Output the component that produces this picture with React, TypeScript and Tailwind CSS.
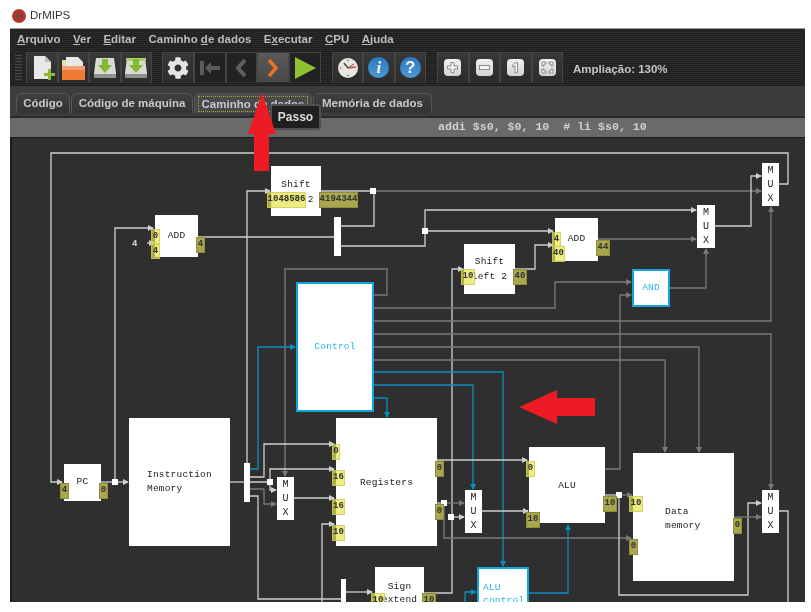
import { FaCog } from "react-icons/fa";

const WHITE = "#cfcfcf";
const GRAY = "#7a7a7a";
const BLUE = "#0a8fc4";

type Wire = { c: string; p: number[][]; arrow?: boolean };

const wires: Wire[] = [
  // program counter loop
  { c: WHITE, p: [[779, 184], [788, 184], [788, 153], [51, 153], [51, 482], [62, 482]], arrow: true },
  { c: WHITE, p: [[101, 482], [128, 482]], arrow: true },
  { c: WHITE, p: [[115, 482], [115, 228], [153, 228]], arrow: true },
  { c: WHITE, p: [[147, 243], [154, 243]], arrow: true },
  { c: WHITE, p: [[198, 237], [334, 237]] },
  { c: WHITE, p: [[341, 226], [374, 226], [374, 191]] },
  { c: WHITE, p: [[341, 246], [425, 246], [425, 210], [696, 210]], arrow: true },
  { c: WHITE, p: [[425, 231], [553, 231]], arrow: true },
  { c: WHITE, p: [[321, 191], [373, 191]] },
  { c: GRAY, p: [[373, 191], [761, 191]], arrow: true },
  { c: WHITE, p: [[247, 463], [247, 191], [270, 191]], arrow: true },
  { c: WHITE, p: [[424, 593], [452, 593], [452, 269], [463, 269]], arrow: true },
  { c: WHITE, p: [[515, 269], [535, 269], [535, 245], [553, 245]], arrow: true },
  { c: GRAY, p: [[598, 239], [696, 239]], arrow: true },
  { c: WHITE, p: [[715, 226], [751, 226], [751, 176], [761, 176]], arrow: true },
  { c: GRAY, p: [[670, 288], [706, 288], [706, 249]], arrow: true },
  // control outputs
  { c: GRAY, p: [[373, 295], [387, 295], [387, 269], [285, 269], [285, 476]], arrow: true },
  { c: GRAY, p: [[373, 308], [555, 308], [555, 282], [631, 282]], arrow: true },
  { c: GRAY, p: [[373, 321], [771, 321], [771, 207]], arrow: true },
  { c: GRAY, p: [[373, 334], [771, 334], [771, 489]], arrow: true },
  { c: GRAY, p: [[373, 347], [699, 347], [699, 452]], arrow: true },
  { c: GRAY, p: [[373, 360], [665, 360], [665, 452]], arrow: true },
  { c: BLUE, p: [[373, 372], [503, 372], [503, 566]], arrow: true },
  { c: BLUE, p: [[373, 385], [473, 385], [473, 489]], arrow: true },
  { c: BLUE, p: [[373, 398], [387, 398], [387, 417]], arrow: true },
  { c: BLUE, p: [[250, 469], [258, 469], [258, 347], [295, 347]], arrow: true },
  // instruction fields
  { c: WHITE, p: [[230, 482], [244, 482]] },
  { c: WHITE, p: [[250, 477], [264, 477], [264, 444], [334, 444]], arrow: true },
  { c: WHITE, p: [[250, 482], [270, 482], [270, 469], [334, 469]], arrow: true },
  { c: WHITE, p: [[270, 482], [270, 490], [276, 490]], arrow: true },
  { c: GRAY, p: [[250, 489], [264, 489], [264, 504], [276, 504]], arrow: true },
  { c: WHITE, p: [[250, 496], [258, 496], [258, 599], [341, 599]] },
  { c: WHITE, p: [[294, 498], [334, 498]], arrow: true },
  { c: WHITE, p: [[322, 610], [322, 524], [334, 524]], arrow: true },
  { c: WHITE, p: [[346, 592], [372, 592]], arrow: true },
  // registers and alu
  { c: WHITE, p: [[437, 460], [527, 460]], arrow: true },
  { c: WHITE, p: [[437, 503], [444, 503]] },
  { c: GRAY, p: [[444, 503], [464, 503]], arrow: true },
  { c: GRAY, p: [[444, 503], [444, 538], [631, 538]], arrow: true },
  { c: WHITE, p: [[451, 517], [464, 517]], arrow: true },
  { c: WHITE, p: [[482, 511], [528, 511]], arrow: true },
  { c: GRAY, p: [[605, 469], [620, 469], [620, 295], [631, 295]], arrow: true },
  { c: WHITE, p: [[605, 495], [619, 495]] },
  { c: GRAY, p: [[619, 495], [632, 495]], arrow: true },
  { c: WHITE, p: [[619, 495], [619, 595], [748, 595], [748, 503], [761, 503]], arrow: true },
  { c: GRAY, p: [[734, 517], [761, 517]], arrow: true },
  { c: WHITE, p: [[779, 511], [788, 511], [788, 610]] },
  { c: BLUE, p: [[528, 593], [568, 593], [568, 525]], arrow: true },
  { c: BLUE, p: [[465, 610], [465, 592], [476, 592]], arrow: true },
];

const dots = [
  [373, 191],
  [425, 231],
  [115, 482],
  [270, 482],
  [444, 503],
  [451, 517],
  [619, 495],
];

function arrowHead(w: Wire) {
  const a = w.p[w.p.length - 2];
  const b = w.p[w.p.length - 1];
  const dx = Math.sign(b[0] - a[0]);
  const dy = Math.sign(b[1] - a[1]);
  const s = 5;
  const pts = [
    [b[0] + dx, b[1] + dy],
    [b[0] - dx * s - dy * 3, b[1] - dy * s - dx * 3],
    [b[0] - dx * s + dy * 3, b[1] - dy * s + dx * 3],
  ];
  return pts.map((q) => q.join(",")).join(" ");
}

function Wires() {
  return (
    <svg className="absolute left-0 top-0" width={811} height={612} viewBox="0 0 811 612">
      {wires.map((w, i) => (
        <g key={i}>
          <polyline points={w.p.map((q) => q.join(",")).join(" ")} fill="none" stroke={w.c} strokeWidth={1.3} />
          {w.arrow && <polygon points={arrowHead(w)} fill={w.c} />}
        </g>
      ))}
      {dots.map(([x, y]) => (
        <rect key={`${x}-${y}`} x={x - 3} y={y - 3} width={6} height={6} fill="#ffffff" />
      ))}
    </svg>
  );
}

function Block({ pos, lines, blue, text }: { pos: string; lines?: string[]; blue?: boolean; text?: string }) {
  return (
    <div
      className={`absolute flex flex-col justify-center bg-white font-['Liberation_Mono',monospace] text-[9.5px] tracking-[0.2px] whitespace-pre ${
        blue ? "border-2 border-[#12a5dc] text-[#25b4ea]" : "text-[#222222]"
      } ${pos} ${text ?? "items-center"}`}
    >
      {lines?.map((l, i) => (
        <div key={i}>{l}</div>
      ))}
    </div>
  );
}

function Mux({ pos }: { pos: string }) {
  return (
    <div
      className={`absolute flex flex-col items-center justify-center gap-[3px] bg-white font-['Liberation_Mono',monospace] text-[10px] leading-[11px] text-[#222222] ${pos}`}
    >
      <div>M</div>
      <div>U</div>
      <div>X</div>
    </div>
  );
}

function Val({ pos, v, dark }: { pos: string; v: string; dark?: boolean }) {
  return (
    <div
      className={`absolute flex items-center justify-center border font-['Liberation_Mono',monospace] text-[9px] font-bold text-[#333333] ${
        dark ? "border-[#8f8d38] bg-[#a8a64e]" : "border-[#c8c860]/70 bg-[#e6e650]/70"
      } ${pos}`}
    >
      {v}
    </div>
  );
}

function Bar({ pos }: { pos: string }) {
  return <div className={`absolute bg-white ${pos}`} />;
}

function Datapath() {
  return (
    <div className="relative flex-1 overflow-hidden border-l-2 border-[#1b1b1b] bg-[#2f2f2f]">
      <div className="absolute left-[-12px] top-[-138px] h-[760px] w-[811px]">
        <Wires />
        <div className="absolute left-[132px] top-[238px] font-['Liberation_Mono',monospace] text-[9px] font-bold text-[#d8d8d8]">4</div>

        <Block pos="left-[271px] top-[166px] w-[50px] h-[50px]" lines={["Shift", "left 2"]} text="items-center pt-[1px] leading-[15px]" />
        <Block pos="left-[155px] top-[215px] w-[43px] h-[42px]" lines={["ADD"]} />
        <Block pos="left-[555px] top-[218px] w-[43px] h-[43px]" lines={["ADD"]} />
        <Block pos="left-[464px] top-[244px] w-[51px] h-[50px]" lines={["Shift", "left 2"]} text="items-center leading-[15px]" />
        <Block pos="left-[632px] top-[269px] w-[38px] h-[38px]" lines={["AND"]} blue />
        <Block pos="left-[296px] top-[282px] w-[78px] h-[130px]" lines={["Control"]} blue />
        <Block pos="left-[64px] top-[464px] w-[37px] h-[37px]" lines={["PC"]} />
        <Block pos="left-[129px] top-[418px] w-[101px] h-[128px]" lines={["Instruction", "Memory"]} text="items-start pl-[18px] leading-[14px]" />
        <Block pos="left-[336px] top-[418px] w-[101px] h-[128px]" lines={["Registers"]} text="items-center pt-[2px]" />
        <Block pos="left-[529px] top-[447px] w-[76px] h-[76px]" lines={["ALU"]} text="items-center pt-[2px]" />
        <Block pos="left-[633px] top-[453px] w-[101px] h-[128px]" lines={["Data", "memory"]} text="items-start pl-[32px] pt-[4px] leading-[14px]" />
        <Block pos="left-[375px] top-[567px] w-[49px] h-[50px]" lines={["Sign", "extend"]} text="items-center pt-[2px] leading-[13px]" />
        <Block pos="left-[477px] top-[567px] w-[52px] h-[52px]" lines={["ALU", "control"]} blue text="items-start pl-[4px] pt-[2px] leading-[13px]" />

        <Mux pos="left-[762px] top-[163px] w-[17px] h-[43px]" />
        <Mux pos="left-[697px] top-[205px] w-[18px] h-[43px]" />
        <Mux pos="left-[277px] top-[477px] w-[17px] h-[43px]" />
        <Mux pos="left-[465px] top-[490px] w-[17px] h-[43px]" />
        <Mux pos="left-[762px] top-[490px] w-[17px] h-[43px]" />

        <Bar pos="left-[334px] top-[217px] w-[7px] h-[39px]" />
        <Bar pos="left-[244px] top-[463px] w-[6px] h-[39px]" />
        <Bar pos="left-[341px] top-[579px] w-[5px] h-[40px]" />

        <Val pos="left-[267px] top-[192px] w-[39px] h-[16px]" v="1048586" />
        <Val pos="left-[319px] top-[192px] w-[39px] h-[16px]" v="4194344" dark />
        <Val pos="left-[151px] top-[229px] w-[9px] h-[15px]" v="0" />
        <Val pos="left-[151px] top-[244px] w-[9px] h-[15px]" v="4" />
        <Val pos="left-[196px] top-[237px] w-[9px] h-[16px]" v="4" dark />
        <Val pos="left-[552px] top-[232px] w-[9px] h-[15px]" v="4" />
        <Val pos="left-[552px] top-[246px] w-[13px] h-[16px]" v="40" />
        <Val pos="left-[596px] top-[240px] w-[14px] h-[16px]" v="44" dark />
        <Val pos="left-[461px] top-[269px] w-[14px] h-[16px]" v="10" />
        <Val pos="left-[513px] top-[269px] w-[14px] h-[16px]" v="40" dark />
        <Val pos="left-[60px] top-[483px] w-[9px] h-[16px]" v="4" dark />
        <Val pos="left-[99px] top-[483px] w-[9px] h-[16px]" v="0" dark />
        <Val pos="left-[332px] top-[444px] w-[8px] h-[16px]" v="0" />
        <Val pos="left-[332px] top-[470px] w-[13px] h-[16px]" v="16" />
        <Val pos="left-[332px] top-[499px] w-[13px] h-[16px]" v="16" />
        <Val pos="left-[332px] top-[525px] w-[13px] h-[16px]" v="10" />
        <Val pos="left-[435px] top-[461px] w-[9px] h-[16px]" v="0" dark />
        <Val pos="left-[435px] top-[504px] w-[9px] h-[16px]" v="0" dark />
        <Val pos="left-[526px] top-[461px] w-[9px] h-[16px]" v="0" />
        <Val pos="left-[526px] top-[512px] w-[14px] h-[16px]" v="10" dark />
        <Val pos="left-[603px] top-[496px] w-[14px] h-[16px]" v="10" dark />
        <Val pos="left-[629px] top-[496px] w-[14px] h-[16px]" v="10" />
        <Val pos="left-[629px] top-[539px] w-[9px] h-[16px]" v="0" dark />
        <Val pos="left-[733px] top-[518px] w-[9px] h-[16px]" v="0" dark />
        <Val pos="left-[371px] top-[593px] w-[14px] h-[16px]" v="10" />
        <Val pos="left-[422px] top-[593px] w-[14px] h-[16px]" v="10" dark />
      </div>
    </div>
  );
}

function Tool({ children, tone }: { children: React.ReactNode; tone?: "off" | "hot" }) {
  const bg =
    tone === "off"
      ? "bg-[#222222]"
      : tone === "hot"
        ? "bg-gradient-to-b from-[#5a5a5a] to-[#474747]"
        : "bg-gradient-to-b from-[#383838] to-[#2c2c2c]";
  return (
    <div className={`flex h-[31px] flex-1 items-center justify-center border border-[#444444] border-b-[#333333] ${bg}`}>
      {children}
    </div>
  );
}

function NewIcon() {
  return (
    <svg width="26" height="27" viewBox="0 0 26 27">
      <path d="M5 2h11l6 6v17H5z" fill="#e9e9e9" />
      <path d="M16 2v6h6z" fill="#bdbdbd" />
      <path d="M15 19h4v-4h3v4h4v3h-4v4h-3v-4h-4z" fill="#8cb93a" />
    </svg>
  );
}

function OpenIcon() {
  return (
    <svg width="26" height="26" viewBox="0 0 26 26">
      <path d="M6 2h12l5 5v6H6z" fill="#e8e8e8" />
      <path d="M2 5h4v6H2z" fill="#f0d9a8" />
      <rect x="2" y="11" width="23" height="14" fill="#ee7a35" />
      <rect x="2" y="11" width="23" height="4" fill="#f4a070" />
    </svg>
  );
}

function SaveIcon({ bar }: { bar?: boolean }) {
  return (
    <svg width="26" height="26" viewBox="0 0 26 26">
      <path d="M4 3h18l2 15v5H2v-5z" fill="#d9dcd6" />
      <rect x="2" y="19" width="22" height="4" fill="#8f938c" />
      {bar && <rect x="3" y="3" width="20" height="3" fill="#a9d15c" />}
      <path d="M10 4h6v6h4l-7 8-7-8h4z" fill="#86b832" />
    </svg>
  );
}

function ClockIcon() {
  return (
    <svg width="22" height="22" viewBox="0 0 22 22">
      <circle cx="11" cy="11" r="10" fill="#e8e6df" />
      <path d="M11 11L7 6" stroke="#444444" strokeWidth="1.4" />
      <path d="M11 11l8-1" stroke="#d8443a" strokeWidth="1.4" />
      <path d="M11 11l6-4" stroke="#555555" strokeWidth="1" />
      <circle cx="11" cy="3.5" r="0.8" fill="#666666" />
      <circle cx="3.5" cy="11" r="0.8" fill="#666666" />
      <circle cx="11" cy="18.5" r="0.8" fill="#666666" />
    </svg>
  );
}

function RoundIcon({ glyph, serif }: { glyph: string; serif?: boolean }) {
  return (
    <div
      className={`flex h-[21px] w-[21px] items-center justify-center rounded-full bg-gradient-to-b from-[#2e78bc] to-[#4b9ad8] text-[17px] font-bold text-[#f2f6fa] ${
        serif ? "font-['Liberation_Serif',serif] italic" : "font-['Liberation_Sans',sans-serif]"
      }`}
    >
      {glyph}
    </div>
  );
}

function ZoomIcon({ children }: { children: React.ReactNode }) {
  return (
    <div className="flex h-[17px] w-[17px] items-center justify-center rounded-[4px] bg-gradient-to-b from-[#f2f2f2] to-[#d2d2d2]">
      <svg width="13" height="13" viewBox="0 0 13 13" fill="#f4f4f4" stroke="#8c8c8c" strokeWidth="1">
        {children}
      </svg>
    </div>
  );
}

function Toolbar() {
  return (
    <div className="flex h-[35px] items-start pl-[5px] pt-[1px]">
      <div className="mr-[4px] mt-[3px] h-[25px] w-[7px] bg-[repeating-linear-gradient(0deg,#4a4a4a_0,#4a4a4a_1px,#262626_1px,#262626_3px)]" />
      <div className="flex w-[126px]">
        <Tool><NewIcon /></Tool>
        <Tool><OpenIcon /></Tool>
        <Tool><SaveIcon /></Tool>
        <Tool><SaveIcon bar /></Tool>
      </div>
      <div className="ml-[10px] flex w-[159px]">
        <Tool><FaCog className="h-[22px] w-[22px] text-[#e4e4e4]" /></Tool>
        <Tool tone="off">
          <svg width="24" height="18" viewBox="0 0 24 18">
            <path d="M2 2h4v14H2zM7 9l6-6v4h9v4h-9v4z" fill="#5c5c5c" />
          </svg>
        </Tool>
        <Tool tone="off">
          <svg width="14" height="20" viewBox="0 0 14 20">
            <path d="M11 2L4 10l7 8" fill="none" stroke="#5f5f5f" strokeWidth="4" />
          </svg>
        </Tool>
        <Tool tone="hot">
          <svg width="14" height="20" viewBox="0 0 14 20">
            <path d="M3 2l7 8-7 8" fill="none" stroke="#e8702a" strokeWidth="3.6" />
          </svg>
        </Tool>
        <Tool tone="off">
          <svg width="24" height="24" viewBox="0 0 24 24">
            <path d="M2 1l21 11L2 23z" fill="#8fc02f" />
          </svg>
        </Tool>
      </div>
      <div className="ml-[11px] flex w-[94px]">
        <Tool><ClockIcon /></Tool>
        <Tool><RoundIcon glyph="i" serif /></Tool>
        <Tool><RoundIcon glyph="?" /></Tool>
      </div>
      <div className="ml-[11px] flex w-[126px]">
        <Tool>
          <ZoomIcon><path d="M5 1.5h3v3.5h3.5v3H8v3.5H5V8H1.5V5H5z" /></ZoomIcon>
        </Tool>
        <Tool>
          <ZoomIcon><rect x="1.5" y="4.5" width="10" height="4" /></ZoomIcon>
        </Tool>
        <Tool>
          <ZoomIcon><path d="M3.5 4l3.5-2.5h1.5v10H6V5L3.5 6z" /></ZoomIcon>
        </Tool>
        <Tool>
          <ZoomIcon>
            <path d="M1 1h4v2H3v2H1zM8 1h4v4h-2V3H8zM1 8h2v2h2v2H1zM10 8h2v4H8v-2h2z" />
          </ZoomIcon>
        </Tool>
      </div>
      <div className="ml-[10px] mt-[9px] text-[11.5px] font-bold text-[#c4c4c4]">Ampliação: 130%</div>
    </div>
  );
}

function Tab({ w, label, active }: { w: string; label: string; active?: boolean }) {
  return (
    <div
      className={`flex h-[20px] items-center justify-center rounded-t-[6px] border border-b-0 border-[#555555] text-[11.5px] font-bold text-[#c8c8c8] ${w} ${
        active ? "bg-[#4a4a4a]" : "bg-gradient-to-b from-[#3f3f3f] to-[#333333]"
      }`}
    >
      {active ? <span className="border border-dotted border-[#a89a40] px-[3px] leading-[14px]">{label}</span> : label}
    </div>
  );
}

export default function App() {
  return (
    <div className="relative h-[612px] w-[811px] overflow-hidden bg-white font-['Liberation_Sans',Arial,sans-serif] blur-[0.5px]">
      <div className="flex h-[28px] items-center gap-[4px] pl-[12px] pt-[9px] pb-[5px] text-[11.5px] text-[#333333]">
        <div className="h-[14px] w-[14px] rounded-full bg-[radial-gradient(circle,#8a3d38_20%,#b8352e_60%,#c9564e_100%)]" />
        DrMIPS
      </div>
      <div className="ml-[10px] flex h-[574px] w-[795px] flex-col border-t border-[#a0a0a0]">
        <div className="h-[57px] bg-[repeating-linear-gradient(0deg,#1f1f1f_0,#1f1f1f_1px,#2b2b2b_1px,#2b2b2b_2px)]">
          <div className="flex h-[22px] items-center gap-[12.5px] pl-[7px] text-[11.5px] font-bold text-[#bdbdbd]">
            <span><u>A</u>rquivo</span>
            <span><u>V</u>er</span>
            <span><u>E</u>ditar</span>
            <span>Caminho <u>d</u>e dados</span>
            <span>E<u>x</u>ecutar</span>
            <span><u>C</u>PU</span>
            <span><u>A</u>juda</span>
          </div>
          <Toolbar />
        </div>
        <div className="flex h-[32px] items-end gap-[1px] border-b-2 border-[#2a2a2a] bg-[#3c3c3c] pb-[3px] pl-[6px]">
          <Tab w="w-[54px]" label="Código" />
          <Tab w="w-[122px]" label="Código de máquina" />
          <Tab w="w-[118px]" label="Caminho de dados" active />
          <Tab w="w-[119px]" label="Memória de dados" />
        </div>
        <div className="h-[20px] border-b border-[#1e1e1e] bg-[#6a6a6a] pl-[428px] font-['Liberation_Mono',monospace] text-[11.6px] leading-[17px] font-bold whitespace-pre text-[#d0d0d0]">
          addi $s0, $0, 10  # li $s0, 10
        </div>
        <Datapath />
      </div>

      <div className="absolute left-[270px] top-[104px] flex h-[26px] w-[51px] items-center justify-center rounded-[3px] border-2 border-[#505050] bg-[#1f1f1f] text-[12px] font-bold text-[#dcdcdc]">
        Passo
      </div>
      <svg className="absolute left-0 top-0" width={811} height={612} viewBox="0 0 811 612">
        <path d="M262 93l14 41h-7v37h-15v-37h-6z" fill="#ed1c24" />
        <path d="M519 407l38-17v8h38v18h-38v8z" fill="#ed1c24" />
      </svg>
    </div>
  );
}
